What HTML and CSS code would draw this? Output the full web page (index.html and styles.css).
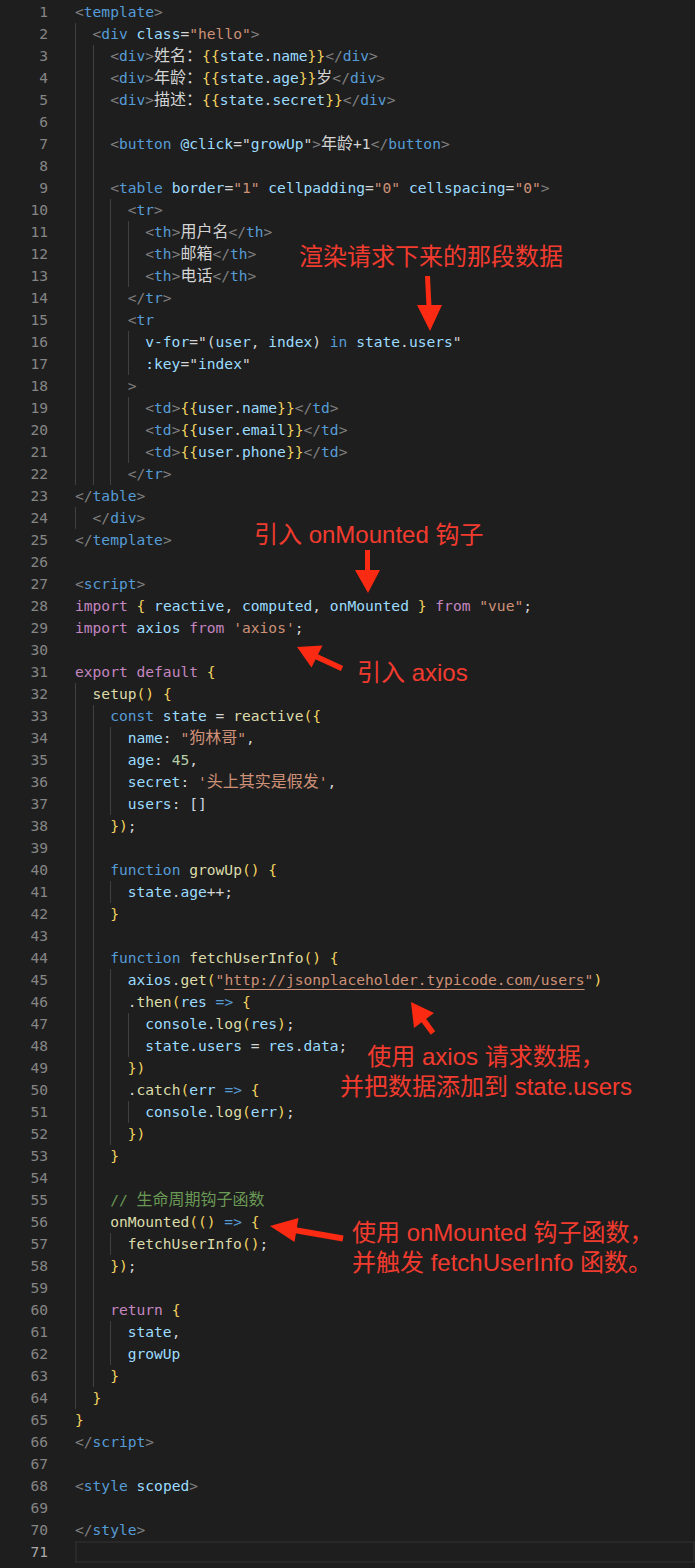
FILE: index.html
```html
<!DOCTYPE html>
<html lang="zh-CN">
<head>
<meta charset="utf-8">
<title>Home.vue</title>
<link rel="stylesheet" href="styles.css">
</head>
<body>
<div class="editor">
<div class="line"><span class="ln">1</span><span class="code"><span class="p">&lt;</span><span class="t">template</span><span class="p">&gt;</span></span></div>
<div class="line"><span class="ln">2</span><span class="code"><span class="i">  </span><span class="p">&lt;</span><span class="t">div</span> <span class="a">class</span>=<span class="s">"hello"</span><span class="p">&gt;</span></span></div>
<div class="line"><span class="ln">3</span><span class="code"><span class="i">  </span><span class="i">  </span><span class="p">&lt;</span><span class="t">div</span><span class="p">&gt;</span><span class="cj">姓名：</span><span class="b">{{</span><span class="v">state</span>.<span class="v">name</span><span class="b">}}</span><span class="p">&lt;/</span><span class="t">div</span><span class="p">&gt;</span></span></div>
<div class="line"><span class="ln">4</span><span class="code"><span class="i">  </span><span class="i">  </span><span class="p">&lt;</span><span class="t">div</span><span class="p">&gt;</span><span class="cj">年龄：</span><span class="b">{{</span><span class="v">state</span>.<span class="v">age</span><span class="b">}}</span><span class="cj">岁</span><span class="p">&lt;/</span><span class="t">div</span><span class="p">&gt;</span></span></div>
<div class="line"><span class="ln">5</span><span class="code"><span class="i">  </span><span class="i">  </span><span class="p">&lt;</span><span class="t">div</span><span class="p">&gt;</span><span class="cj">描述：</span><span class="b">{{</span><span class="v">state</span>.<span class="v">secret</span><span class="b">}}</span><span class="p">&lt;/</span><span class="t">div</span><span class="p">&gt;</span></span></div>
<div class="line"><span class="ln">6</span><span class="code"><span class="i">  </span><span class="i">  </span></span></div>
<div class="line"><span class="ln">7</span><span class="code"><span class="i">  </span><span class="i">  </span><span class="p">&lt;</span><span class="t">button</span> <span class="a">@click</span>="<span class="v">growUp</span>"<span class="p">&gt;</span><span class="cj">年龄</span>+1<span class="p">&lt;/</span><span class="t">button</span><span class="p">&gt;</span></span></div>
<div class="line"><span class="ln">8</span><span class="code"><span class="i">  </span><span class="i">  </span></span></div>
<div class="line"><span class="ln">9</span><span class="code"><span class="i">  </span><span class="i">  </span><span class="p">&lt;</span><span class="t">table</span> <span class="a">border</span>=<span class="s">"1"</span> <span class="a">cellpadding</span>=<span class="s">"0"</span> <span class="a">cellspacing</span>=<span class="s">"0"</span><span class="p">&gt;</span></span></div>
<div class="line"><span class="ln">10</span><span class="code"><span class="i">  </span><span class="i">  </span><span class="i">  </span><span class="p">&lt;</span><span class="t">tr</span><span class="p">&gt;</span></span></div>
<div class="line"><span class="ln">11</span><span class="code"><span class="i">  </span><span class="i">  </span><span class="i">  </span><span class="i">  </span><span class="p">&lt;</span><span class="t">th</span><span class="p">&gt;</span><span class="cj">用户名</span><span class="p">&lt;/</span><span class="t">th</span><span class="p">&gt;</span></span></div>
<div class="line"><span class="ln">12</span><span class="code"><span class="i">  </span><span class="i">  </span><span class="i">  </span><span class="i">  </span><span class="p">&lt;</span><span class="t">th</span><span class="p">&gt;</span><span class="cj">邮箱</span><span class="p">&lt;/</span><span class="t">th</span><span class="p">&gt;</span></span></div>
<div class="line"><span class="ln">13</span><span class="code"><span class="i">  </span><span class="i">  </span><span class="i">  </span><span class="i">  </span><span class="p">&lt;</span><span class="t">th</span><span class="p">&gt;</span><span class="cj">电话</span><span class="p">&lt;/</span><span class="t">th</span><span class="p">&gt;</span></span></div>
<div class="line"><span class="ln">14</span><span class="code"><span class="i">  </span><span class="i">  </span><span class="i">  </span><span class="p">&lt;/</span><span class="t">tr</span><span class="p">&gt;</span></span></div>
<div class="line"><span class="ln">15</span><span class="code"><span class="i">  </span><span class="i">  </span><span class="i">  </span><span class="p">&lt;</span><span class="t">tr</span></span></div>
<div class="line"><span class="ln">16</span><span class="code"><span class="i">  </span><span class="i">  </span><span class="i">  </span><span class="i">  </span><span class="a">v-for</span>="(<span class="v">user</span>, <span class="v">index</span>) <span class="w">in</span> <span class="v">state</span>.<span class="v">users</span>"</span></div>
<div class="line"><span class="ln">17</span><span class="code"><span class="i">  </span><span class="i">  </span><span class="i">  </span><span class="i">  </span><span class="a">:key</span>="<span class="v">index</span>"</span></div>
<div class="line"><span class="ln">18</span><span class="code"><span class="i">  </span><span class="i">  </span><span class="i">  </span><span class="p">&gt;</span></span></div>
<div class="line"><span class="ln">19</span><span class="code"><span class="i">  </span><span class="i">  </span><span class="i">  </span><span class="i">  </span><span class="p">&lt;</span><span class="t">td</span><span class="p">&gt;</span><span class="b">{{</span><span class="v">user</span>.<span class="v">name</span><span class="b">}}</span><span class="p">&lt;/</span><span class="t">td</span><span class="p">&gt;</span></span></div>
<div class="line"><span class="ln">20</span><span class="code"><span class="i">  </span><span class="i">  </span><span class="i">  </span><span class="i">  </span><span class="p">&lt;</span><span class="t">td</span><span class="p">&gt;</span><span class="b">{{</span><span class="v">user</span>.<span class="v">email</span><span class="b">}}</span><span class="p">&lt;/</span><span class="t">td</span><span class="p">&gt;</span></span></div>
<div class="line"><span class="ln">21</span><span class="code"><span class="i">  </span><span class="i">  </span><span class="i">  </span><span class="i">  </span><span class="p">&lt;</span><span class="t">td</span><span class="p">&gt;</span><span class="b">{{</span><span class="v">user</span>.<span class="v">phone</span><span class="b">}}</span><span class="p">&lt;/</span><span class="t">td</span><span class="p">&gt;</span></span></div>
<div class="line"><span class="ln">22</span><span class="code"><span class="i">  </span><span class="i">  </span><span class="i">  </span><span class="p">&lt;/</span><span class="t">tr</span><span class="p">&gt;</span></span></div>
<div class="line"><span class="ln">23</span><span class="code"><span class="p">&lt;/</span><span class="t">table</span><span class="p">&gt;</span></span></div>
<div class="line"><span class="ln">24</span><span class="code"><span class="i">  </span><span class="p">&lt;/</span><span class="t">div</span><span class="p">&gt;</span></span></div>
<div class="line"><span class="ln">25</span><span class="code"><span class="p">&lt;/</span><span class="t">template</span><span class="p">&gt;</span></span></div>
<div class="line"><span class="ln">26</span><span class="code"></span></div>
<div class="line"><span class="ln">27</span><span class="code"><span class="p">&lt;</span><span class="t">script</span><span class="p">&gt;</span></span></div>
<div class="line"><span class="ln">28</span><span class="code"><span class="k">import</span> <span class="b">{</span> <span class="v">reactive</span>, <span class="v">computed</span>, <span class="v">onMounted</span> <span class="b">}</span> <span class="k">from</span> <span class="s">"vue"</span>;</span></div>
<div class="line"><span class="ln">29</span><span class="code"><span class="k">import</span> <span class="v">axios</span> <span class="k">from</span> <span class="s">'axios'</span>;</span></div>
<div class="line"><span class="ln">30</span><span class="code"></span></div>
<div class="line"><span class="ln">31</span><span class="code"><span class="k">export</span> <span class="k">default</span> <span class="b">{</span></span></div>
<div class="line"><span class="ln">32</span><span class="code"><span class="i">  </span><span class="f">setup</span><span class="b">()</span> <span class="b">{</span></span></div>
<div class="line"><span class="ln">33</span><span class="code"><span class="i">  </span><span class="i">  </span><span class="w">const</span> <span class="v">state</span> = <span class="f">reactive</span><span class="b">({</span></span></div>
<div class="line"><span class="ln">34</span><span class="code"><span class="i">  </span><span class="i">  </span><span class="i">  </span><span class="v">name</span>: <span class="s">"<span class="cj">狗林哥</span>"</span>,</span></div>
<div class="line"><span class="ln">35</span><span class="code"><span class="i">  </span><span class="i">  </span><span class="i">  </span><span class="v">age</span>: <span class="n">45</span>,</span></div>
<div class="line"><span class="ln">36</span><span class="code"><span class="i">  </span><span class="i">  </span><span class="i">  </span><span class="v">secret</span>: <span class="s">'<span class="cj">头上其实是假发</span>'</span>,</span></div>
<div class="line"><span class="ln">37</span><span class="code"><span class="i">  </span><span class="i">  </span><span class="i">  </span><span class="v">users</span>: <span class="sq">[]</span></span></div>
<div class="line"><span class="ln">38</span><span class="code"><span class="i">  </span><span class="i">  </span><span class="b">})</span>;</span></div>
<div class="line"><span class="ln">39</span><span class="code"><span class="i">  </span><span class="i">  </span></span></div>
<div class="line"><span class="ln">40</span><span class="code"><span class="i">  </span><span class="i">  </span><span class="w">function</span> <span class="f">growUp</span><span class="b">()</span> <span class="b">{</span></span></div>
<div class="line"><span class="ln">41</span><span class="code"><span class="i">  </span><span class="i">  </span><span class="i">  </span><span class="v">state</span>.<span class="v">age</span>++;</span></div>
<div class="line"><span class="ln">42</span><span class="code"><span class="i">  </span><span class="i">  </span><span class="b">}</span></span></div>
<div class="line"><span class="ln">43</span><span class="code"><span class="i">  </span><span class="i">  </span></span></div>
<div class="line"><span class="ln">44</span><span class="code"><span class="i">  </span><span class="i">  </span><span class="w">function</span> <span class="f">fetchUserInfo</span><span class="b">()</span> <span class="b">{</span></span></div>
<div class="line"><span class="ln">45</span><span class="code"><span class="i">  </span><span class="i">  </span><span class="i">  </span><span class="v">axios</span>.<span class="f">get</span><span class="b">(</span><span class="s">"<span class="u">http://jsonplaceholder.typicode.com/users</span>"</span><span class="b">)</span></span></div>
<div class="line"><span class="ln">46</span><span class="code"><span class="i">  </span><span class="i">  </span><span class="i">  </span>.<span class="f">then</span><span class="b">(</span><span class="v">res</span> <span class="w">=&gt;</span> <span class="b">{</span></span></div>
<div class="line"><span class="ln">47</span><span class="code"><span class="i">  </span><span class="i">  </span><span class="i">  </span><span class="i">  </span><span class="v">console</span>.<span class="f">log</span><span class="b">(</span><span class="v">res</span><span class="b">)</span>;</span></div>
<div class="line"><span class="ln">48</span><span class="code"><span class="i">  </span><span class="i">  </span><span class="i">  </span><span class="i">  </span><span class="v">state</span>.<span class="v">users</span> = <span class="v">res</span>.<span class="v">data</span>;</span></div>
<div class="line"><span class="ln">49</span><span class="code"><span class="i">  </span><span class="i">  </span><span class="i">  </span><span class="b">})</span></span></div>
<div class="line"><span class="ln">50</span><span class="code"><span class="i">  </span><span class="i">  </span><span class="i">  </span>.<span class="f">catch</span><span class="b">(</span><span class="v">err</span> <span class="w">=&gt;</span> <span class="b">{</span></span></div>
<div class="line"><span class="ln">51</span><span class="code"><span class="i">  </span><span class="i">  </span><span class="i">  </span><span class="i">  </span><span class="v">console</span>.<span class="f">log</span><span class="b">(</span><span class="v">err</span><span class="b">)</span>;</span></div>
<div class="line"><span class="ln">52</span><span class="code"><span class="i">  </span><span class="i">  </span><span class="i">  </span><span class="b">})</span></span></div>
<div class="line"><span class="ln">53</span><span class="code"><span class="i">  </span><span class="i">  </span><span class="b">}</span></span></div>
<div class="line"><span class="ln">54</span><span class="code"><span class="i">  </span><span class="i">  </span></span></div>
<div class="line"><span class="ln">55</span><span class="code"><span class="i">  </span><span class="i">  </span><span class="c">// <span class="cj">生命周期钩子函数</span></span></span></div>
<div class="line"><span class="ln">56</span><span class="code"><span class="i">  </span><span class="i">  </span><span class="f">onMounted</span><span class="b">(()</span> <span class="w">=&gt;</span> <span class="b">{</span></span></div>
<div class="line"><span class="ln">57</span><span class="code"><span class="i">  </span><span class="i">  </span><span class="i">  </span><span class="f">fetchUserInfo</span><span class="b">()</span>;</span></div>
<div class="line"><span class="ln">58</span><span class="code"><span class="i">  </span><span class="i">  </span><span class="b">})</span>;</span></div>
<div class="line"><span class="ln">59</span><span class="code"><span class="i">  </span><span class="i">  </span></span></div>
<div class="line"><span class="ln">60</span><span class="code"><span class="i">  </span><span class="i">  </span><span class="k">return</span> <span class="b">{</span></span></div>
<div class="line"><span class="ln">61</span><span class="code"><span class="i">  </span><span class="i">  </span><span class="i">  </span><span class="v">state</span>,</span></div>
<div class="line"><span class="ln">62</span><span class="code"><span class="i">  </span><span class="i">  </span><span class="i">  </span><span class="v">growUp</span></span></div>
<div class="line"><span class="ln">63</span><span class="code"><span class="i">  </span><span class="i">  </span><span class="b">}</span></span></div>
<div class="line"><span class="ln">64</span><span class="code"><span class="i">  </span><span class="b">}</span></span></div>
<div class="line"><span class="ln">65</span><span class="code"><span class="b">}</span></span></div>
<div class="line"><span class="ln">66</span><span class="code"><span class="p">&lt;/</span><span class="t">script</span><span class="p">&gt;</span></span></div>
<div class="line"><span class="ln">67</span><span class="code"></span></div>
<div class="line"><span class="ln">68</span><span class="code"><span class="p">&lt;</span><span class="t">style</span> <span class="a">scoped</span><span class="p">&gt;</span></span></div>
<div class="line"><span class="ln">69</span><span class="code"></span></div>
<div class="line"><span class="ln">70</span><span class="code"><span class="p">&lt;/</span><span class="t">style</span><span class="p">&gt;</span></span></div>
<div class="line active"><span class="ln">71</span><span class="code"></span></div>

<div class="note n1">渲染请求下来的那段数据</div>
<div class="note n2">引入 onMounted 钩子</div>
<div class="note n3">引入 axios</div>
<div class="note n4">使用 axios 请求数据，<br>并把数据添加到 state.users</div>
<div class="note n5">使用 onMounted 钩子函数，<br>并触发 fetchUserInfo 函数。</div>

<svg class="arrows" width="695" height="1568" viewBox="0 0 695 1568" xmlns="http://www.w3.org/2000/svg">
  <g fill="#fb2a12" stroke="#fb2a12" stroke-linecap="butt">
    <line x1="427.5" y1="276" x2="429" y2="307" stroke-width="5"/>
    <polygon points="417,305 442,305 430,331" stroke="none"/>
    <line x1="367.5" y1="550" x2="367.5" y2="572" stroke-width="5"/>
    <polygon points="355,570 380,570 368,593" stroke="none"/>
    <line x1="342" y1="668.5" x2="315" y2="656" stroke-width="5.5"/>
    <polygon points="297,647 322.5,645.5 311.5,667.5" stroke="none"/>
    <line x1="433" y1="1033" x2="422" y2="1018" stroke-width="5.5"/>
    <polygon points="411,1002 434,1013 414,1028" stroke="none"/>
    <line x1="343" y1="1238.5" x2="294" y2="1230" stroke-width="6"/>
    <polygon points="270,1226 298.5,1218 294.5,1242" stroke="none"/>
  </g>
</svg>
</div>
</body>
</html>
```

FILE: styles.css
```css
* {
  box-sizing: border-box;
}

html,
body {
  margin: 0;
  padding: 0;
  background: #1e1e1e;
}

body {
  width: 695px;
  height: 1568px;
  overflow: hidden;
}

.editor {
  position: relative;
  padding-top: 1px;
  font-family: "DejaVu Sans Mono", "Noto Sans CJK SC", monospace;
  font-size: 14.6px;
  color: #d4d4d4;
}

.line {
  display: flex;
  height: 22px;
  line-height: 22px;
  white-space: pre;
}

.ln {
  flex: none;
  width: 48px;
  text-align: right;
  color: #858585;
}

.code {
  flex: 1;
  margin-left: 27px;
  height: 22px;
}

.line.active .ln {
  color: #a8a8a8;
}

.line.active .code {
  box-shadow: inset 0 0 0 2px #282828;
}

.i {
  display: inline-block;
  width: 2ch;
  height: 22px;
  vertical-align: top;
  box-shadow: inset 1px 0 0 #404040;
}

.cj {
  font-family: "Noto Sans CJK SC", sans-serif;
  font-size: 16px;
  line-height: 0;
}

.p { color: #808080; }
.t { color: #569cd6; }
.a { color: #9cdcfe; }
.s { color: #ce9178; }
.v { color: #9cdcfe; }
.k { color: #c586c0; }
.w { color: #569cd6; }
.f { color: #dcdcaa; }
.n { color: #b5cea8; }
.c { color: #6a9955; }
.b { color: #f2d35f; }
.sq { color: #cfd8e6; }

.u {
  text-decoration: underline;
  text-decoration-color: #ce9178;
  text-underline-offset: 4px;
}

.note {
  position: absolute;
  font-family: "Liberation Sans", "Noto Sans CJK SC", sans-serif;
  font-size: 24px;
  line-height: 30px;
  color: #f23b2f;
  white-space: nowrap;
}

.n1 { left: 299px; top: 242px; }
.n2 { left: 254px; top: 520px; }
.n3 { left: 357px; top: 658px; }
.n4 { left: 330px; top: 1042px; width: 312px; text-align: center; }
.n5 { left: 352px; top: 1218px; }

.arrows {
  position: absolute;
  left: 0;
  top: 0;
  pointer-events: none;
}
```
